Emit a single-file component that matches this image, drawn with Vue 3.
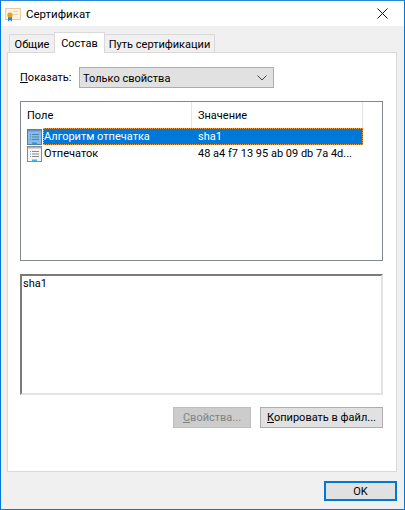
<script setup>
const rows = [
  { name: 'Алгоритм отпечатка', value: 'sha1', selected: true },
  { name: 'Отпечаток', value: '48 a4 f7 13 95 ab 09 db 7a 4d...', selected: false },
]
</script>

<template>
  <div class="window">
    <header class="titlebar">
      <svg class="cert-icon" width="16" height="16" viewBox="0 0 16 16">
        <rect x="0.5" y="2.5" width="15" height="11" fill="#fbf3e0" stroke="#e6cfa4" />
        <rect x="8" y="5" width="5" height="1" fill="#e3d5bd" />
        <rect x="8" y="8" width="5" height="1" fill="#e3d5bd" />
        <path d="M3 11 L3 15.5 L5 14 L7 15.5 L7 11 Z" fill="#2f7fd6" />
        <circle cx="5" cy="9" r="2.6" fill="#e0a020" />
      </svg>
      <span class="title">Сертификат</span>
      <svg class="close" width="11" height="11" viewBox="0 0 11 11">
        <path d="M0.5 0.5 L10.5 10.5 M10.5 0.5 L0.5 10.5" stroke="#111" stroke-width="1" fill="none" />
      </svg>
    </header>

    <main class="client">
      <nav class="tabs">
        <div class="tab tab-first">Общие</div>
        <div class="tab tab-active">Состав</div>
        <div class="tab tab-last">Путь сертификации</div>
      </nav>

      <section class="panel">
        <div class="show-row">
          <label class="show-label"><u>П</u>оказать:</label>
          <div class="combo">
            <span>Только свойства</span>
            <svg width="10" height="6" viewBox="0 0 10 6">
              <path d="M0.5 0.5 L5 5 L9.5 0.5" stroke="#444" fill="none" />
            </svg>
          </div>
        </div>

        <div class="list">
          <div class="list-head">
            <div class="col-name head-cell">Поле</div>
            <div class="col-value head-cell">Значение</div>
          </div>
          <div v-for="row in rows" :key="row.name" class="row">
            <span class="icon-wrap" :class="{ tinted: row.selected }">
              <svg width="15" height="16" viewBox="0 0 15 16">
                <rect x="0.5" y="0.5" width="14" height="15" fill="#f6f6f6" stroke="#8a8a8a" />
                <rect x="1" y="1" width="13" height="1.5" fill="#b4b4b4" />
                <rect x="3" y="5" width="1" height="1" fill="#8a9aa8" />
                <rect x="5" y="5" width="7" height="1" fill="#8a8a8a" />
                <rect x="3" y="7.5" width="1" height="1" fill="#8a9aa8" />
                <rect x="5" y="7.5" width="7" height="1" fill="#8a8a8a" />
                <rect x="3" y="10" width="1" height="1" fill="#8a9aa8" />
                <rect x="5" y="10" width="7" height="1" fill="#8a8a8a" />
                <rect x="5" y="13.5" width="5" height="1.5" fill="#35b8f0" />
              </svg>
            </span>
            <div class="row-cells" :class="{ selected: row.selected }">
              <div class="cell-name">{{ row.name }}</div>
              <div class="cell-value">{{ row.value }}</div>
            </div>
          </div>
        </div>

        <div class="detail">sha1</div>

        <div class="actions">
          <button class="btn btn-disabled" disabled><u>С</u>войства...</button>
          <button class="btn btn-copy"><u>К</u>опировать в файл...</button>
        </div>
      </section>

      <footer class="footer">
        <button class="btn btn-ok">OK</button>
      </footer>
    </main>
  </div>
</template>

<style>
html, body { margin: 0; padding: 0; background: #fff; }
</style>

<style scoped>
.window {
  width: 405px;
  height: 510px;
  box-sizing: border-box;
  border: 1px solid #0078d7;
  border-top-color: #2a8ad8;
  display: flex;
  flex-direction: column;
  background: #f0f0f0;
  font-family: Roboto, "Noto Sans", sans-serif;
  font-size: 11px;
  color: #000;
  overflow: hidden;
  white-space: nowrap;
}
.titlebar {
  height: 25px;
  background: #fff;
  display: flex;
  align-items: center;
  padding: 0 16px 0 4px;
  flex: none;
}
.cert-icon { margin-right: 5px; }
.title { flex: 1; font-size: 11.5px; }
.client {
  flex: 1;
  display: flex;
  flex-direction: column;
  padding: 7px 7px 8px 6px;
  min-height: 0;
}
.tabs {
  display: flex;
  align-items: flex-end;
  height: 20px;
  padding-left: 2px;
  position: relative;
  z-index: 1;
  margin-bottom: -1px;
}
.tab {
  box-sizing: border-box;
  height: 19px;
  line-height: 20px;
  background: #f0f0f0;
  border: 1px solid #d9d9d9;
  border-right: 0;
  text-align: center;
}
.tab-first { width: 45px; }
.tab-active {
  width: 51px;
  height: 21px;
  line-height: 21px;
  background: #fff;
  border-right: 1px solid #d9d9d9;
  border-bottom: 0;
}
.tab-last {
  width: 110px;
  border-left: 0;
  border-right: 1px solid #d9d9d9;
}
.panel {
  flex: 1;
  background: #fff;
  border: 1px solid #d9d9d9;
  padding: 14px 12px 0 12px;
  display: flex;
  flex-direction: column;
  min-height: 0;
}
.show-row { display: flex; align-items: center; height: 21px; }
.show-label { width: 59px; }
.combo {
  box-sizing: border-box;
  width: 195px;
  height: 21px;
  background: #e1e1e1;
  border: 1px solid #adadad;
  display: flex;
  align-items: center;
  justify-content: space-between;
  padding: 1px 3px 0 3px;
}
.combo svg { margin-right: 3px; }
.list {
  box-sizing: border-box;
  width: 363px;
  height: 160px;
  margin-top: 13px;
  background: #fff;
  border: 1px solid #828790;
  flex: none;
}
.list-head { display: flex; height: 26px; }
.head-cell {
  box-sizing: border-box;
  line-height: 28px;
  padding-left: 6px;
  border-right: 1px solid #e5e5e5;
}
.col-name { width: 171px; }
.col-value { width: 171px; }
.row { display: flex; height: 17px; padding-left: 6px; align-items: center; }
.icon-wrap { display: flex; flex: none; width: 15px; height: 16px; margin-right: 1px; }
.icon-wrap.tinted { background: #0078d7; }
.icon-wrap.tinted svg { opacity: 0.55; }
.row-cells { display: flex; width: 320px; height: 17px; line-height: 18px; }
.row-cells.selected {
  background: #0078d7;
  color: #fff;
  outline: 1px dotted #f0a040;
  outline-offset: -1px;
}
.cell-name { width: 149px; flex: none; padding-left: 1px; box-sizing: border-box; }
.cell-value { padding-left: 6px; white-space: nowrap; }
.detail {
  box-sizing: border-box;
  width: 363px;
  height: 121px;
  margin-top: 13px;
  padding: 1px 1px;
  background: #fff;
  border: 2px solid;
  border-color: #7a7a7a #e3e3e3 #e3e3e3 #7a7a7a;
  flex: none;
}
.actions {
  display: flex;
  justify-content: flex-end;
  gap: 9px;
  margin-top: 12px;
  padding-right: 1px;
}
.btn {
  box-sizing: border-box;
  height: 21px;
  padding: 0;
  font: inherit;
  color: #000;
  background: #e1e1e1;
  border: 1px solid #adadad;
}
.btn-disabled {
  width: 78px;
  background: #cccccc;
  border-color: #bfbfbf;
  color: #838383;
}
.btn-copy { width: 123px; }
.footer {
  display: flex;
  justify-content: flex-end;
  margin-top: 9px;
}
.btn-ok {
  width: 73px;
  height: 20px;
  border: 2px solid #0078d7;
}
</style>
